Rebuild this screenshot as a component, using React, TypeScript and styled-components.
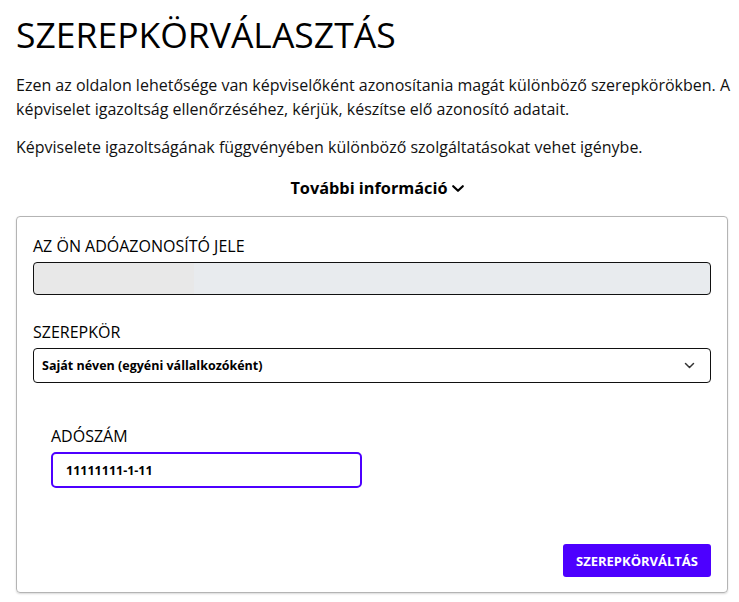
import React, { useState } from 'react';
import styled, { createGlobalStyle } from 'styled-components';

const GlobalStyle = createGlobalStyle`
  html, body {
    margin: 0;
    padding: 0;
    background: #ffffff;
  }
  body {
    font-family: 'Open Sans', 'Noto Sans', sans-serif;
    color: #111111;
  }
`;

const Page = styled.main`
  padding: 9px 4px 10px 16px;
`;

const Title = styled.h1`
  margin: 0 0 14px;
  font-size: 35.5px;
  line-height: 50px;
  font-weight: 400;
  color: #000;
`;

const Lead = styled.p`
  margin: 0 0 14px;
  font-size: 16px;
  line-height: 24px;
  color: #111;
`;

const MoreToggle = styled.button`
  display: flex;
  align-items: center;
  gap: 3px;
  margin: 18px auto 17px;
  padding: 0 0 0 4px;
  border: none;
  background: none;
  font-family: inherit;
  font-size: 16.3px;
  line-height: 22px;
  font-weight: 700;
  color: #000;
  cursor: pointer;
`;

const Card = styled.section`
  width: 712px;
  box-sizing: border-box;
  border: 1px solid #b4b4b4;
  border-radius: 4px;
  box-shadow: 0 1px 2px rgba(0, 0, 0, 0.15);
  padding: 16px 16px 15px 16px;
  display: flex;
  flex-direction: column;
`;

const Field = styled.div<{ $indent?: boolean; $gap: number }>`
  display: flex;
  flex-direction: column;
  padding-left: ${p => (p.$indent ? '18px' : '0')};
  margin-bottom: ${p => p.$gap}px;
`;

const Label = styled.label`
  font-size: 16px;
  line-height: 26px;
  margin-bottom: 3px;
  color: #000;
  text-transform: uppercase;
`;

const ReadOnlyBox = styled.div`
  height: 33px;
  box-sizing: border-box;
  border: 1px solid #111;
  border-radius: 4px;
  background: linear-gradient(90deg, #e8e8e8 0%, #e8e8e8 23.6%, #e8ebee 23.6%, #e8ebee 100%);
`;

const SelectBox = styled.div`
  height: 35px;
  box-sizing: border-box;
  border: 1px solid #111;
  border-radius: 4px;
  display: flex;
  align-items: center;
  justify-content: space-between;
  padding: 0 15px 0 8px;
  font-size: 12.5px;
  font-weight: 700;
  color: #000;
`;

const TextInput = styled.input`
  width: 311px;
  height: 36px;
  box-sizing: border-box;
  border: 2px solid #4d00ff;
  border-radius: 5px;
  padding: 0 13px;
  font-family: 'Open Sans', sans-serif;
  font-size: 12.5px;
  font-weight: 700;
  color: #000;
  outline: none;
  caret-color: #000;
`;

const Actions = styled.div`
  display: flex;
  justify-content: flex-end;
`;

const PrimaryButton = styled.button`
  height: 33px;
  padding: 0 13px;
  border: none;
  border-radius: 3px;
  background: #4d00ff;
  color: #fff;
  font-family: 'Open Sans', sans-serif;
  font-size: 13px;
  font-weight: 700;
  text-transform: uppercase;
  cursor: pointer;
`;

const Chevron: React.FC<{ width: number; height: number; stroke: number; color?: string }> = ({
  width,
  height,
  stroke,
  color = '#000',
}) => (
  <svg width={width} height={height} viewBox={`0 0 ${width} ${height}`} fill="none">
    <path
      d={`M${stroke} ${stroke} L${width / 2} ${height - stroke} L${width - stroke} ${stroke}`}
      stroke={color}
      strokeWidth={stroke}
      strokeLinecap="round"
      strokeLinejoin="round"
    />
  </svg>
);

const App: React.FC = () => {
  const [taxNumber, setTaxNumber] = useState('11111111-1-11');

  return (
    <>
      <GlobalStyle />
      <Page>
        <Title>SZEREPKÖRVÁLASZTÁS</Title>
        <Lead>
          Ezen az oldalon lehetősége van képviselőként azonosítania magát különböző szerepkörökben. A
          képviselet igazoltság ellenőrzéséhez, kérjük, készítse elő azonosító adatait.
        </Lead>
        <Lead>Képviselete igazoltságának függvényében különböző szolgáltatásokat vehet igénybe.</Lead>
        <MoreToggle>
          További információ <Chevron width={14} height={9} stroke={2.2} />
        </MoreToggle>

        <Card>
          <Field $gap={24}>
            <Label>Az ön adóazonosító jele</Label>
            <ReadOnlyBox />
          </Field>

          <Field $gap={40}>
            <Label>Szerepkör</Label>
            <SelectBox>
              <span>Saját néven (egyéni vállalkozóként)</span>
              <Chevron width={11} height={7} stroke={1.5} color="#333" />
            </SelectBox>
          </Field>

          <Field $indent $gap={56}>
            <Label>Adószám</Label>
            <TextInput autoFocus value={taxNumber} onChange={e => setTaxNumber(e.target.value)} />
          </Field>

          <Actions>
            <PrimaryButton>Szerepkörváltás</PrimaryButton>
          </Actions>
        </Card>
      </Page>
    </>
  );
};

export default App;
